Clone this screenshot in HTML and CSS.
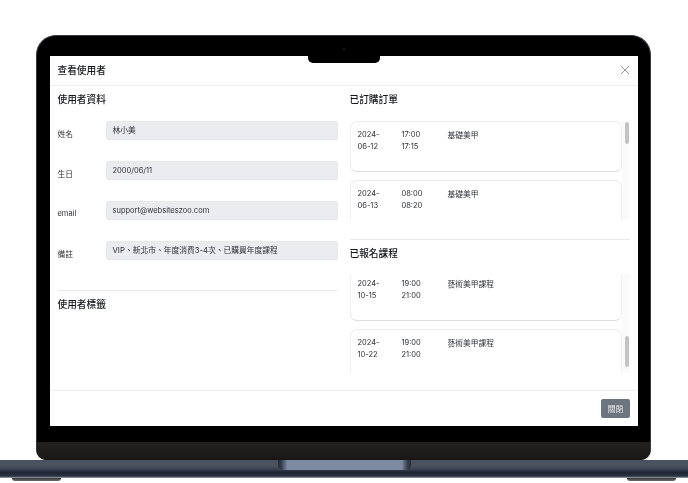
FILE: index.html
```html
<!DOCTYPE html>
<html lang="zh-Hant">
<head>
    <meta charset="UTF-8">
    <meta name="viewport" content="width=device-width, initial-scale=1.0">
    <title>查看使用者</title>
    <link rel="stylesheet" href="styles.css">
</head>
<body>
    <div class="laptop">
        <div class="lid">
            <div class="notch"><div class="camera"></div></div>
            <div class="screen">
                <div class="modal-header">
                    <span class="modal-title">查看使用者</span>
                    <svg class="close-icon" viewBox="0 0 10 10" width="10" height="10">
                        <path d="M1 1 9 9M9 1 1 9" stroke="#7b7e82" stroke-width="0.8" fill="none"/>
                    </svg>
                </div>
                <div class="modal-body">
                    <div class="col-left">
                        <h2 class="section-title">使用者資料</h2>
                        <div class="field"><label class="zh">姓名</label><div class="input zh">林小美</div></div>
                        <div class="field"><label class="zh">生日</label><div class="input">2000/06/11</div></div>
                        <div class="field"><label>email</label><div class="input">support@websiteszoo.com</div></div>
                        <div class="field"><label class="zh">備註</label><div class="input zh">VIP、新北市、年度消費3-4次、已購買年度課程</div></div>
                        <hr class="divider divider-left">
                        <h2 class="section-title section-title-sub">使用者標籤</h2>
                    </div>
                    <div class="col-right">
                        <h2 class="section-title">已訂購訂單</h2>
                        <div class="list list-orders">
                            <div class="list-items">
                                <div class="card">
                                    <div class="card-date">2024-<br>06-12</div>
                                    <div class="card-time">17:00<br>17:15</div>
                                    <div class="zh">基礎美甲</div>
                                </div>
                                <div class="card">
                                    <div class="card-date">2024-<br>06-13</div>
                                    <div class="card-time">08:00<br>08:20</div>
                                    <div class="zh">基礎美甲</div>
                                </div>
                            </div>
                            <div class="scrollbar"><div class="thumb thumb-orders"></div></div>
                        </div>
                        <hr class="divider divider-right">
                        <h2 class="section-title section-title-sub">已報名課程</h2>
                        <div class="list list-courses">
                            <div class="list-items">
                                <div class="card card-scrolled">
                                    <div class="card-date">2024-<br>10-15</div>
                                    <div class="card-time">19:00<br>21:00</div>
                                    <div class="zh">藝術美甲課程</div>
                                </div>
                                <div class="card">
                                    <div class="card-date">2024-<br>10-22</div>
                                    <div class="card-time">19:00<br>21:00</div>
                                    <div class="zh">藝術美甲課程</div>
                                </div>
                            </div>
                            <div class="scrollbar"><div class="thumb thumb-courses"></div></div>
                        </div>
                    </div>
                </div>
                <div class="modal-footer">
                    <button class="btn-close" type="button">關閉</button>
                </div>
            </div>
            <div class="chin"></div>
        </div>
        <div class="base"><div class="hinge"></div></div>
        <div class="feet"><div class="foot"></div><div class="foot"></div></div>
    </div>
</body>
</html>
```

FILE: styles.css
```css
* {
    box-sizing: border-box;
}
html, body {
    height: 100%;
}
body {
    margin: 0;
    background-color: #fff;
    font-family: Inter, "Noto Sans CJK TC", sans-serif;
    font-size: 7.5px;
    color: #2c2f33;
    overflow: hidden;
}
.zh {
    font-size: 7.75px;
}
.laptop {
    padding-top: 35px;
    filter: blur(0.2px);
}

/* lid */
.lid {
    position: relative;
    height: 425px;
    margin: 0 37px 0 36px;
    padding-top: 20px;
    background-color: #000;
    border: 1px solid #34383f;
    border-width: 1.5px 1.5px 0;
    border-radius: 20px 20px 10px 10px;
    overflow: hidden;
}
.notch {
    position: absolute;
    top: 0;
    left: 270.5px;
    width: 72px;
    height: 27px;
    background-color: #000;
    border-radius: 0 0 5px 5px;
}
.camera {
    width: 2px;
    height: 2px;
    margin: 12px auto 0;
    background-color: #1b2536;
    border-radius: 50%;
}
.screen {
    display: flex;
    flex-direction: column;
    height: 370px;
    margin: 0 12px 0 12.5px;
    background-color: #fff;
}
.chin {
    height: 18px;
    margin-top: 16px;
    background: linear-gradient(#222120, #191817);
}

/* modal */
.modal-header {
    display: flex;
    justify-content: space-between;
    align-items: center;
    height: 30px;
    padding: 0 8px 1px;
    border-bottom: 1px solid #eeeff0;
}
.modal-title {
    font-size: 9.7px;
    font-weight: 500;
    color: #15171a;
}
.close-icon {
    display: block;
}
.modal-body {
    display: flex;
    flex: 1;
    padding: 0 8px;
    gap: 12px;
}
.col-left {
    width: 280px;
}
.col-right {
    width: 280px;
}
.section-title {
    margin: 0;
    height: 35px;
    line-height: 28px;
    font-size: 9.7px;
    font-weight: 500;
    color: #15171a;
}
.section-title-sub {
    height: 34px;
    line-height: 27px;
}
.field {
    display: flex;
    align-items: flex-start;
    height: 40px;
}
.field label {
    width: 48px;
    padding-top: 6.5px;
    line-height: 12px;
}
.input {
    width: 232px;
    height: 19px;
    padding: 0 6px;
    line-height: 17px;
    background-color: #ebecf0;
    border: 1px solid #e6e7ea;
    border-radius: 2px;
}
.divider {
    margin: 0;
    border: 0;
    border-top: 1px solid #e9e9ea;
}
.divider-left {
    margin-top: 9px;
}
.divider-right {
    margin-top: 20px;
}

/* scrolling lists */
.list {
    display: flex;
    height: 99px;
    overflow: hidden;
}
.list-orders {
    height: 98px;
}
.list-items {
    flex: 1;
    overflow: hidden;
}
.card {
    display: flex;
    height: 50.5px;
    padding: 7px 7px;
    margin-bottom: 8px;
    line-height: 12px;
    background-color: #fff;
    border: 1px solid #eceded;
    border-bottom: 1.5px solid #dcddde;
    border-radius: 7px;
}
.card-scrolled {
    margin-top: -4px;
}
.card-date {
    width: 44px;
}
.card-time {
    width: 46px;
}
.scrollbar {
    width: 8px;
    padding: 0 1px 0 3px;
    background-color: #fafafa;
}
.thumb {
    height: 22px;
    background-color: #c4c4c4;
    border-radius: 2px;
}
.thumb-orders {
    margin-top: 1px;
}
.thumb-courses {
    margin-top: 62px;
    height: 31px;
}

.modal-footer {
    display: flex;
    justify-content: flex-end;
    align-items: center;
    height: 36px;
    padding: 0 8px;
    border-top: 1px solid #eeeff0;
}
.btn-close {
    width: 29px;
    height: 19px;
    padding: 0;
    font-family: inherit;
    font-size: 7.75px;
    color: #e8eaec;
    background-color: #6c757d;
    border: 0;
    border-radius: 2px;
}

/* base */
.base {
    display: flex;
    justify-content: center;
    height: 18px;
    background: linear-gradient(#4a5260 0, #4b5361 30%, #3d4554 50%, #1e2635 68%, #2b3341 90%, #a9abae 100%);
}
.hinge {
    width: 133px;
    height: 10px;
    background: linear-gradient(90deg, #232a38 0, #3a4352 3%, #7d8aa1 7%, #7d8aa1 93%, #3a4352 97%, #232a38 100%);
    border-radius: 0 0 5px 5px;
}
.feet {
    display: flex;
    justify-content: space-between;
    padding: 0 12px;
}
.foot {
    width: 49px;
    height: 3px;
    background: linear-gradient(#33363e, #6b6c70);
    border-radius: 0 0 6px 6px;
}
```
